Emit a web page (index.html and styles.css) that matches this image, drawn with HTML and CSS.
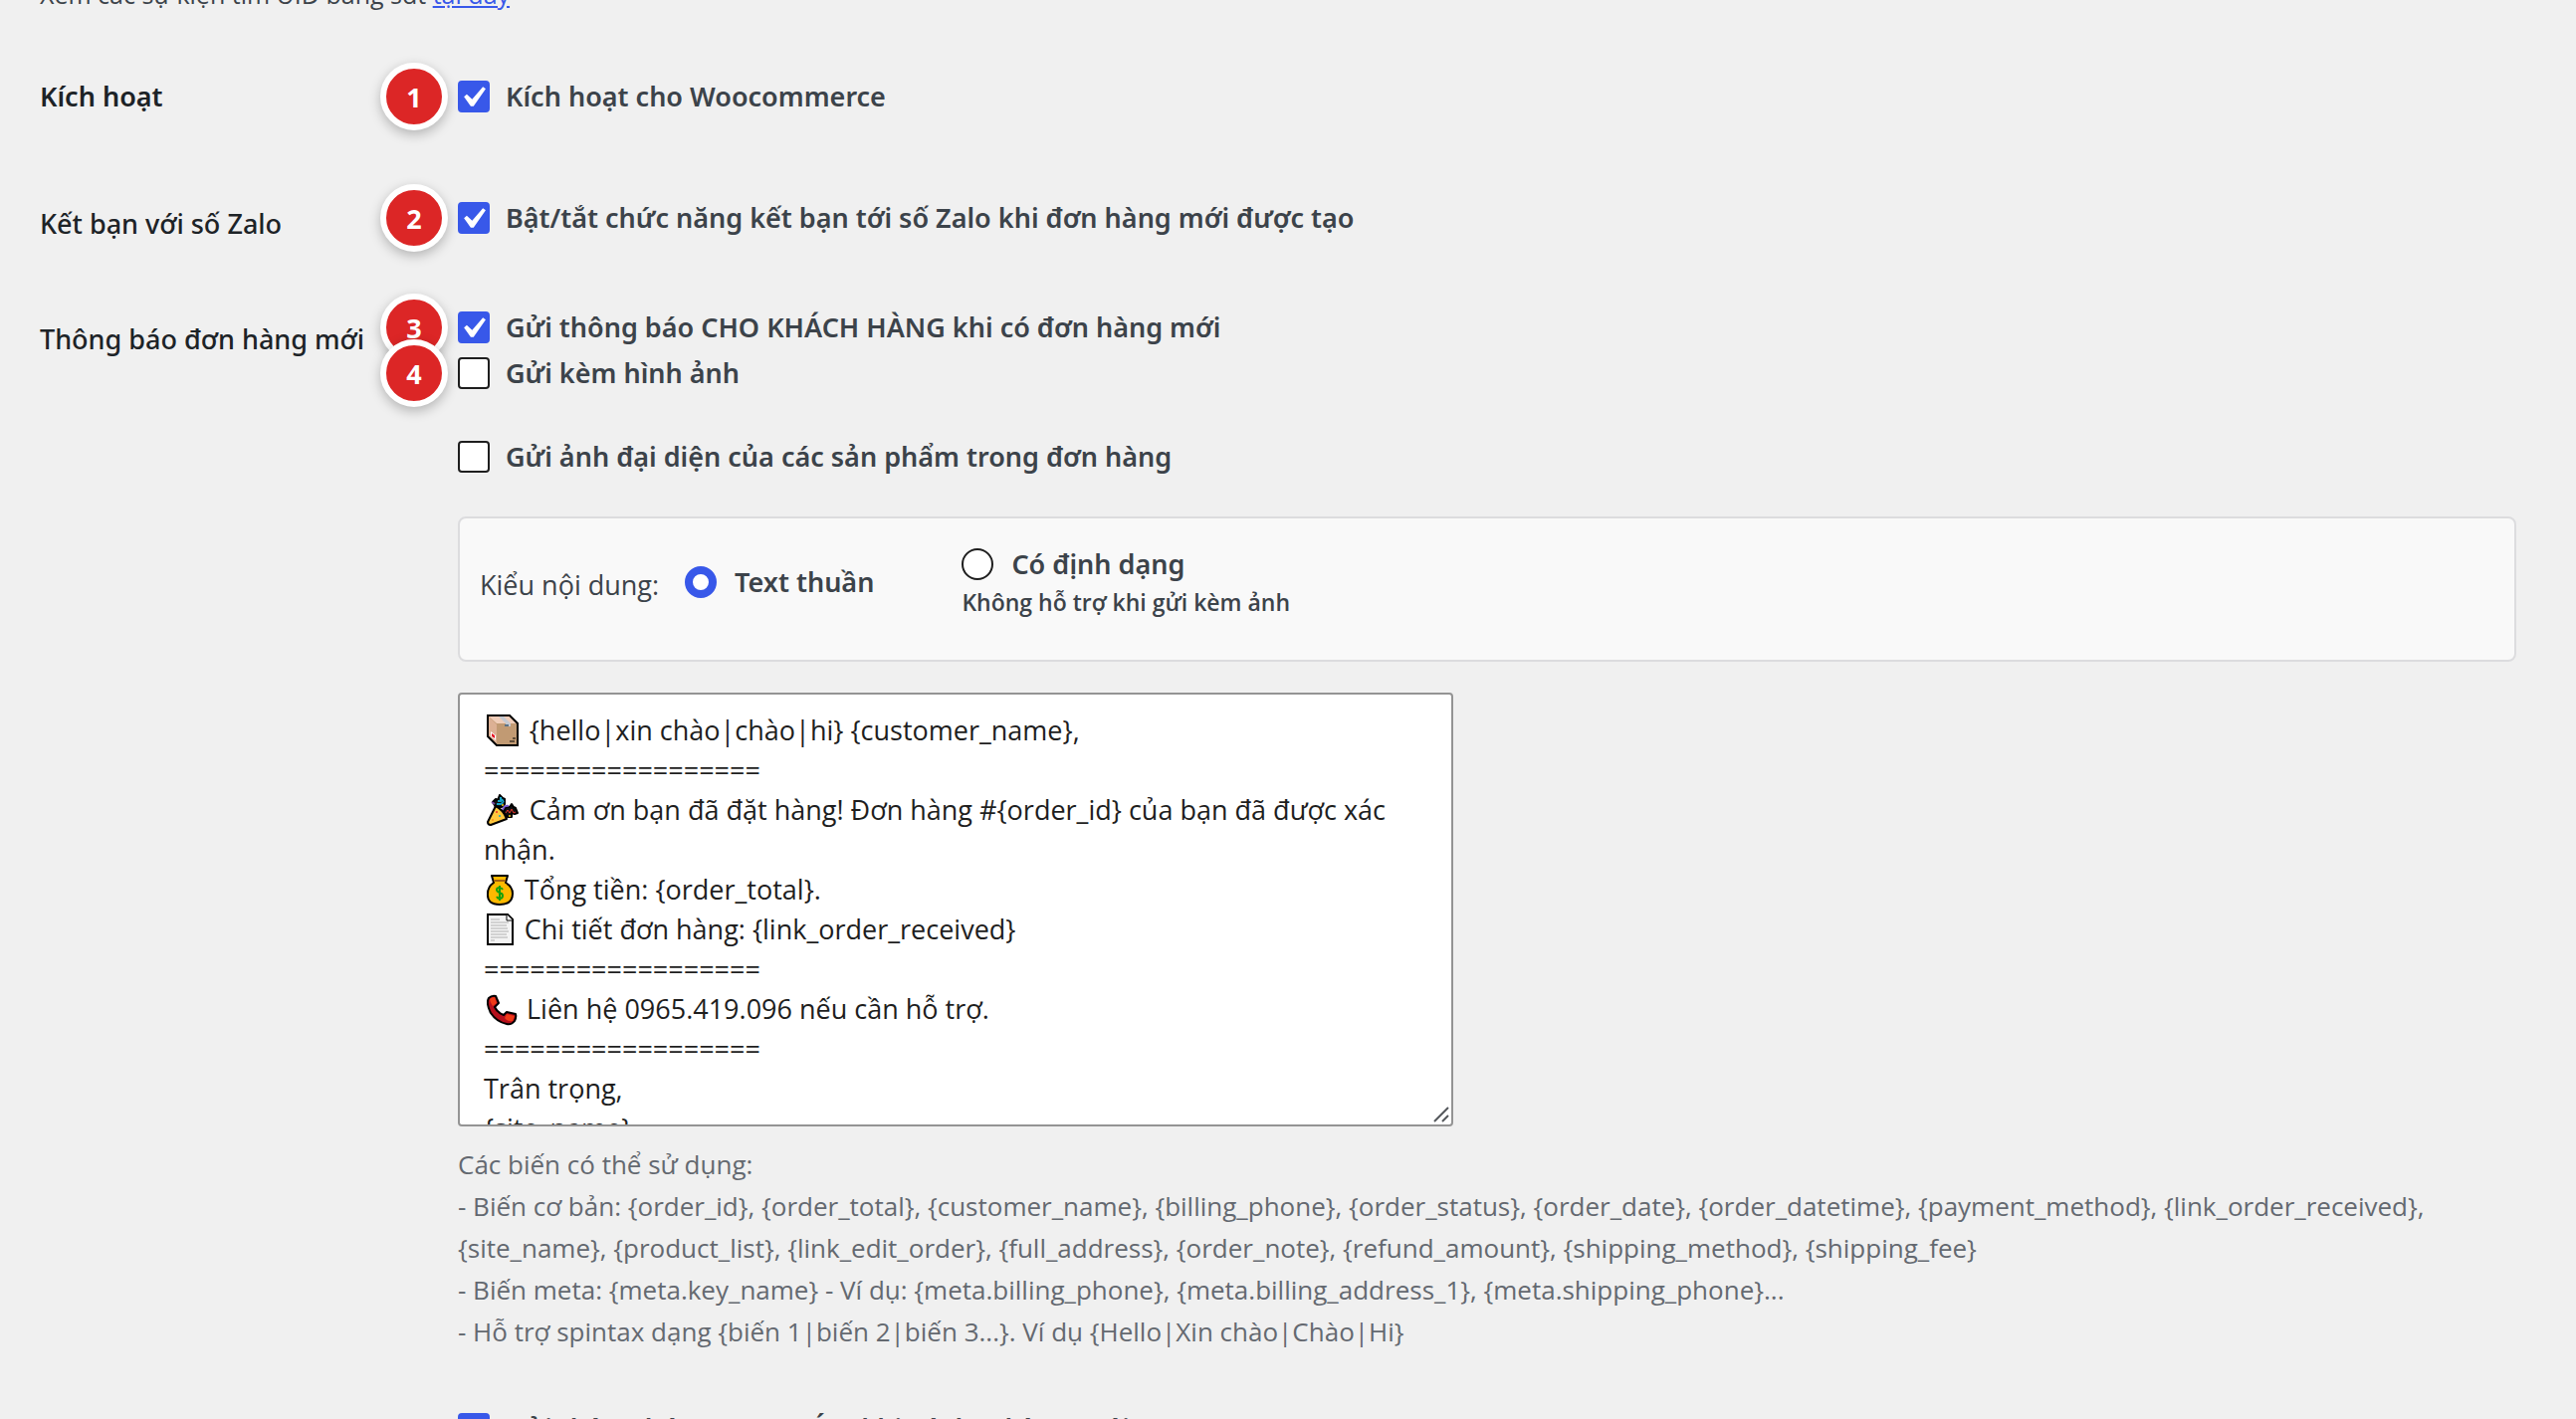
FILE: index.html
```html
<!DOCTYPE html>
<html lang="vi">
<head>
<meta charset="utf-8">
<title>Woocommerce</title>
<link rel="stylesheet" href="styles.css">
</head>
<body>
<main class="page">
  <p class="intro">Xem các sự kiện tìm UID bằng sđt <a href="#uid">tại đây</a></p>
  <form class="settings">
    <section class="row">
      <h2 class="heading heading-strong">Kích hoạt</h2>
      <div class="field">
        <label class="option"><span class="step">1</span><input class="check" type="checkbox" checked>Kích hoạt cho Woocommerce</label>
      </div>
    </section>
    <section class="row row-friend">
      <h2 class="heading">Kết bạn với số Zalo</h2>
      <div class="field">
        <label class="option"><span class="step">2</span><input class="check" type="checkbox" checked>Bật/tắt chức năng kết bạn tới số Zalo khi đơn hàng mới được tạo</label>
      </div>
    </section>
    <section class="row row-order">
      <h2 class="heading">Thông báo đơn hàng mới</h2>
      <div class="field">
        <div class="stack">
          <label class="option"><span class="step">3</span><input class="check" type="checkbox" checked>Gửi thông báo CHO KHÁCH HÀNG khi có đơn hàng mới</label>
          <label class="option"><span class="step">4</span><input class="check" type="checkbox">Gửi kèm hình ảnh</label>
        </div>
        <label class="option option-thumb"><input class="check" type="checkbox">Gửi ảnh đại diện của các sản phẩm trong đơn hàng</label>
        <div class="panel" role="radiogroup" aria-labelledby="kind">
          <span class="kind" id="kind">Kiểu nội dung:</span>
          <label class="option"><input class="radio" type="radio" name="kind" checked>Text thuần</label>
          <div class="choice">
            <label class="option"><input class="radio" type="radio" name="kind" aria-describedby="kind-note">Có định dạng</label>
            <small class="note" id="kind-note">Không hỗ trợ khi gửi kèm ảnh</small>
          </div>
        </div>
        <div class="editor">
          <textarea class="message" rows="10" spellcheck="false" aria-label="Nội dung tin nhắn">&#x2003;&#x2004;&#x200A; {hello|xin chào|chào|hi} {customer_name},
==================
&#x2003;&#x2004;&#x200A; Cảm ơn bạn đã đặt hàng! Đơn hàng #{order_id} của bạn đã được xác nhận.
&#x2003;&#x2005; Tổng tiền: {order_total}.
&#x2003;&#x2005; Chi tiết đơn hàng: {link_order_received}
==================
&#x2003;&#x2004; Liên hệ 0965.419.096 nếu cần hỗ trợ.
==================
Trân trọng,
{site_name}</textarea>
          <svg class="emoji line-1" viewBox="0 0 32 32" aria-hidden="true">
            <path d="M1 1h22l8 8v22H10L1 22z" fill="#c19a73"/>
            <path d="M1 1h22l8 8H10z" fill="#f0cdb9"/>
            <path d="M1 1l9 9v21L1 22z" fill="#dcb094"/>
            <path d="M11 1h5l8 8v3h-5V9z" fill="#c5c9d1"/><path d="M18 10h4v2h-4z" fill="#5d7184"/>
            <path d="M4 17l5 4v5l-5-4z" fill="#fff"/><path d="M5 19l3 2v3l-3-2z" fill="#e81224"/>
            <path d="M26 24h3M23 27h5" stroke="#000" stroke-width="1"/>
            <path d="M1 1h22l8 8v22H10L1 22z" fill="none" stroke="#000" stroke-width="2"/>
          </svg>
          <svg class="emoji line-3" viewBox="0 0 32 32" aria-hidden="true">
            <path d="M6 8l3-3 2 1 2-5 3 3 2 1v5l-3 3-6 0zM17 17l2-4h4l2-3 2 3 2 1 2 5-3 1-3-1 0 4-4 0-4-3z" fill="#111" stroke="#000" stroke-width="2" stroke-linejoin="round"/>
            <path d="M11 7h3V3M15 5l2 3M10 10h4l3-2" stroke="#15a3c7" stroke-width="2" fill="none"/>
            <path d="M5 8l3 2" stroke="#764ba2" stroke-width="2"/>
            <path d="M16 16q1-5 6-4" stroke="#7a5bd0" stroke-width="2" fill="none"/>
            <path d="M19 19l2-3 2 3 2-4 2 4 2-1" stroke="#e8332a" stroke-width="1" fill="none"/>
            <circle cx="16" cy="11" r="1" fill="#f7d51d"/><circle cx="23" cy="22" r="1" fill="#f7d51d"/>
            <path d="M9 12q8 4 11 13L4 31q-3 0-3-3z" fill="#ffc83d" stroke="#000" stroke-width="2" stroke-linejoin="round"/>
            <circle cx="10" cy="18" r="1" fill="#e8332a"/><circle cx="13" cy="22" r="1" fill="#15a3c7"/><circle cx="6" cy="26" r="1" fill="#f7931e"/>
          </svg>
          <svg class="emoji line-5" viewBox="0 0 32 32" aria-hidden="true">
            <path d="M5 2h16l-2 7q7 4 7 11 0 11-13 11T1 20q0-7 6-11z" fill="#ffb900" stroke="#000" stroke-width="2" stroke-linejoin="round"/>
            <path d="M7 7h12" stroke="#a4620f" stroke-width="2"/>
            <path d="M16 16q-1-2-3-2-3 0-3 2 0 2 3 3 3 1 3 3 0 3-3 3-2 0-3-2M13 12v15" fill="none" stroke="#16a10c" stroke-width="2"/>
          </svg>
          <svg class="emoji line-6" viewBox="0 0 32 32" aria-hidden="true">
            <path d="M1 1h20l5 5v25H1z" fill="#f4f4f4" stroke="#000" stroke-width="2"/>
            <path d="M4 6h9M4 9h18M4 12h16M4 15h17M4 18h18M4 21h16M4 24h17M4 27h4" stroke="#b0b0b0" stroke-width="1"/>
            <path d="M20 1v6h6" fill="#fff" stroke="#000" stroke-width="1"/>
          </svg>
          <svg class="emoji line-8" viewBox="0 0 32 32" aria-hidden="true">
            <path d="M2 4q3-3 7-2l3 7-4 4q3 6 9 8l3-3 9 2q1 3-1 7-3 4-8 3Q10 28 4 19-1 9 2 4z" fill="#b50f1c" stroke="#000" stroke-width="2" stroke-linejoin="round"/>
            <path d="M3 5q2-2 5-2l2 6-4 3q-3-4-3-7zM20 20l8 2-2 5q-5 1-8-3z" fill="#f03a17"/>
          </svg>
          <svg class="grip" viewBox="0 0 16 16" aria-hidden="true"><path d="M1 15L15 1M9 15l6-6" stroke="#55585c" stroke-width="2"/></svg>
        </div>
        <p class="help">Các biến có thể sử dụng:<br>
- Biến cơ bản: {order_id}, {order_total}, {customer_name}, {billing_phone}, {order_status}, {order_date}, {order_datetime}, {payment_method}, {link_order_received}, {site_name}, {product_list}, {link_edit_order}, {full_address}, {order_note}, {refund_amount}, {shipping_method}, {shipping_fee}<br>
- Biến meta: {meta.key_name} - Ví dụ: {meta.billing_phone}, {meta.billing_address_1}, {meta.shipping_phone}...<br>
- Hỗ trợ spintax dạng {biến 1|biến 2|biến 3...}. Ví dụ {Hello|Xin chào|Chào|Hi}</p>
        <label class="option"><input class="check" type="checkbox" checked>Gửi thông báo CHO NHÓM khi có đơn hàng mới</label>
      </div>
    </section>
  </form>
</main>
</body>
</html>
```
FILE: styles.css
```css
* { box-sizing: border-box; }
body {
  margin: 0;
  height: 100vh;
  overflow: hidden;
  background: #f0f0f0;
  color: #3c434a;
  font: 400 26px/42px "Open Sans", "Noto Sans", sans-serif;
}
/* The view is scrolled part-way into the settings screen. */
.page { margin-top: -27px; padding: 0 60px 0 40px; }
.intro { margin: 0 0 66px; font-size: 25px; }
.intro a { color: #3858e9; }

.row { display: grid; grid-template-columns: 420px 1fr; align-items: start; }
.row-friend { margin-top: 90px; }
.row-order { margin-top: 72px; }
.heading {
  margin: 0;
  color: #1d2327;
  font: 500 27px/32px "Noto Sans", sans-serif;
}
.row-friend .heading { padding-top: 6px; }
.row-order .heading { padding-top: 12px; }
.heading-strong { font-weight: 600; }

.option {
  position: relative;
  display: flex;
  align-items: center;
  gap: 16px;
  width: fit-content;
  font: 600 27px/32px "Noto Sans", sans-serif;
}
.step {
  position: absolute;
  left: -78px;
  top: -18px;
  width: 68px;
  height: 68px;
  border: 6px solid #fff;
  border-radius: 50%;
  background: #dc2626;
  box-shadow: 0 4px 12px rgba(0, 0, 0, .25);
  color: #fff;
  font-weight: 700;
  line-height: 58px;
  text-align: center;
}
.check, .radio {
  appearance: none;
  flex: none;
  width: 32px;
  height: 32px;
  margin: 0;
  border: 2px solid #1e1e1e;
  border-radius: 4px;
  background: #fff;
}
.check:checked {
  border-color: #3858e9;
  background: #3858e9 url("data:image/svg+xml,%3Csvg xmlns='http://www.w3.org/2000/svg' viewBox='0 0 20 20'%3E%3Cpath d='M14.83 4.89l1.34.94-5.81 8.38H9.02L5.78 9.67l1.34-1.25 2.57 2.4z' fill='%23fff'/%3E%3C/svg%3E") -6px -4px / 42px 42px no-repeat border-box;
}
.radio { border-radius: 50%; }
.radio:checked { border: 8px solid #3858e9; }

.stack { display: grid; gap: 14px; }
.option-thumb { margin-top: 52px; }
.panel {
  display: flex;
  align-items: flex-start;
  margin-top: 44px;
  padding: 30px 20px 36px;
  border: 2px solid #dcdcde;
  border-radius: 8px;
  background: #f9f9f9;
}
.kind { margin-right: 26px; padding-top: 16px; font-size: 27px; }
.panel > .option { margin: 18px 88px 0 0; }
.panel .option { gap: 18px; }
.note {
  display: block;
  font-size: 23px;
  font-weight: 600;
  line-height: 44px;
}

.editor { position: relative; width: 1000px; max-width: 100%; margin-top: 31px; }
.message {
  display: block;
  width: 100%;
  padding: 16px 24px;
  border: 2px solid #949494;
  border-radius: 4px;
  background: #fff;
  color: #1e1e1e;
  font: 400 27px/40px "Open Sans", "Noto Sans", sans-serif;
  resize: none;
  overflow: hidden;
}
.emoji { position: absolute; left: 29px; width: 32px; height: 32px; }
.line-1 { top: 22px; }
.line-3 { top: 102px; }
.line-5 { top: 182px; }
.line-6 { top: 222px; }
.line-8 { top: 303px; }
.grip { position: absolute; right: 4px; bottom: 4px; width: 16px; height: 16px; }
.help { margin: 17px 0 61px; color: #646970; }
```
